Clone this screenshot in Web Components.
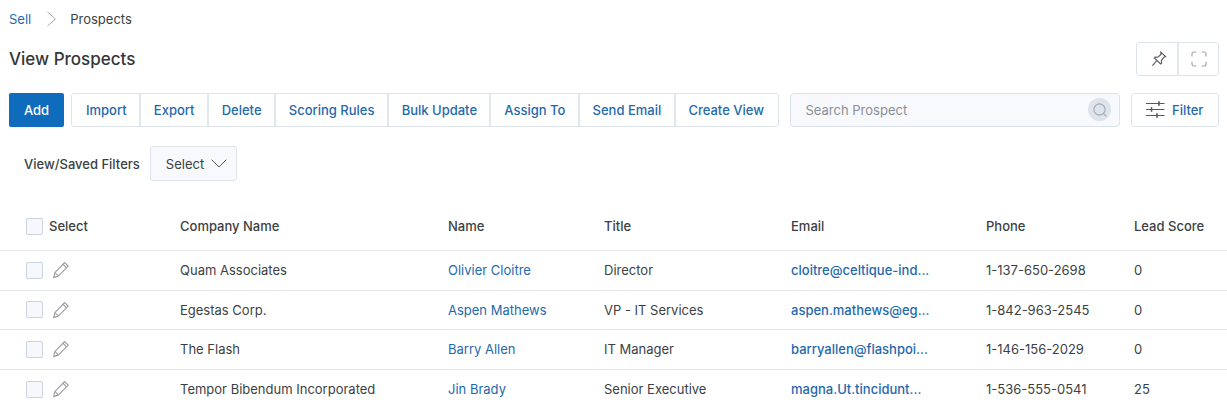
<!DOCTYPE html>
<html lang="en">
<head>
<meta charset="utf-8">
<title>View Prospects</title>
<style>
  html, body { margin: 0; height: 406px; overflow: hidden; background: #fff; }
  body { font-family: Inter, "Liberation Sans", sans-serif; font-size: 13px; color: #3c3f44; }
</style>
</head>
<body>
<prospects-page></prospects-page>

<script>
const ICONS = {
    chevron: '<svg width="11" height="16" viewBox="0 0 11 16" fill="none" stroke="#a9adb3" stroke-width="1"><path d="M1.5 1l8 7-8 7"/></svg>',
    pin: '<svg width="18" height="18" viewBox="0 0 18 18" fill="none" stroke="#55585d" stroke-width="1.1"><path d="M10.8 2.2l4.8 4.4-1.6.6-2.6 3.2.2 2.6-1 .9-6.3-5.9 1-1 2.5.2 3.2-2.8z"/><path d="M6.6 10.9L2.4 15.6"/></svg>',
    expand: '<svg width="16" height="16" viewBox="0 0 16 16" fill="none" stroke="#a3a7ad" stroke-width="1.2" stroke-linecap="round"><path d="M1 5V3a2 2 0 0 1 2-2h2M11 1h2a2 2 0 0 1 2 2v2M15 11v2a2 2 0 0 1-2 2h-2M5 15H3a2 2 0 0 1-2-2v-2"/></svg>',
    search: '<svg width="14" height="14" viewBox="0 0 14 14" fill="none" stroke="#a2a8b0" stroke-width="1.1"><circle cx="6.5" cy="6.5" r="5.6"/><path d="M10.6 10.6l2.8 2.8"/></svg>',
    sliders: '<svg width="19" height="17" viewBox="0 0 19 17" fill="none" stroke="#55585d" stroke-width="1.2"><path d="M0 2.5h18.5M0 8.5h18.5M0 14.5h18.5"/><path d="M13 .2v4.6M5.5 6.2v4.6M11 12.2v4.6" stroke-width="1.6"/></svg>',
    caret: '<svg width="16" height="9" viewBox="0 0 16 9" fill="none" stroke="#55585d" stroke-width="1"><path d="M.7.7L8 8l7.3-7.3"/></svg>',
    pencil: '<svg width="18" height="18" viewBox="0 0 18 18" fill="none" stroke="#94989e" stroke-width="1.05"><path d="M12.6 1.6l3.6 3.4L6.4 15l-4.7 1.6L3 11.5z"/><path d="M3 11.5l3.4 3.5M11 3.3l3.6 3.5"/></svg>'
};

class AppIcon extends HTMLElement {
    connectedCallback() {
        this.attachShadow({ mode: 'open' });
        this.shadowRoot.innerHTML = `
            <style>:host { display: inline-flex; align-items: center; justify-content: center; }</style>
            ${ICONS[this.getAttribute('name')]}`;
    }
}
customElements.define('app-icon', AppIcon);

class AppCheckbox extends HTMLElement {
    connectedCallback() {
        this.attachShadow({ mode: 'open' });
        this.shadowRoot.innerHTML = `
            <style>
                :host {
                    display: block;
                    box-sizing: border-box;
                    width: 17px;
                    height: 17px;
                    background: #f6f8fb;
                    border: 1.5px solid #c9d4e2;
                    border-radius: 2px;
                }
            </style>`;
    }
}
customElements.define('app-checkbox', AppCheckbox);

// one cell of the button strip
class AppButton extends HTMLElement {
    connectedCallback() {
        this.attachShadow({ mode: 'open' });
        this.shadowRoot.innerHTML = `
            <style>
                :host {
                    display: flex;
                    align-items: center;
                    justify-content: center;
                    box-sizing: border-box;
                    height: 100%;
                    padding: 0 12.4px 0 12.8px;
                    font-weight: 500;
                    font-size: 13px;
                    color: #1f69ae;
                    border-left: 2px solid #e2e7ee;
                    white-space: nowrap;
                }
                :host(:first-child) { border-left: 0; padding-left: 14px; }
                :host(:last-child) { flex: 1; justify-content: flex-start; }
            </style>
            <slot></slot>`;
    }
}
customElements.define('app-button', AppButton);

class ButtonGroup extends HTMLElement {
    connectedCallback() {
        this.attachShadow({ mode: 'open' });
        this.shadowRoot.innerHTML = `
            <style>
                :host {
                    display: flex;
                    flex: none;
                    box-sizing: border-box;
                    height: 34.5px;
                    background: #fff;
                    border: 1px solid #dfe4ec;
                    border-radius: 3px;
                }
            </style>
            <slot></slot>`;
    }
}
customElements.define('button-group', ButtonGroup);

class SearchBox extends HTMLElement {
    connectedCallback() {
        this.attachShadow({ mode: 'open' });
        this.shadowRoot.innerHTML = `
            <style>
                :host {
                    display: flex;
                    flex: none;
                    align-items: center;
                    justify-content: space-between;
                    box-sizing: border-box;
                    height: 34.5px;
                    padding: 0 8px 0 14.5px;
                    background: #f7f9fc;
                    border: 1px solid #dbe2ea;
                    border-radius: 4px;
                    color: #8b8f95;
                }
                .go {
                    display: flex;
                    align-items: center;
                    justify-content: center;
                    width: 23px;
                    height: 23px;
                    border-radius: 50%;
                    background: #dde4ec;
                }
            </style>
            <span>${this.getAttribute('placeholder')}</span>
            <span class="go"><app-icon name="search"></app-icon></span>`;
    }
}
customElements.define('search-box', SearchBox);

class ProspectRow extends HTMLElement {
    connectedCallback() {
        const [company, name, title, email, phone, score] = JSON.parse(this.getAttribute('data-cells'));
        this.attachShadow({ mode: 'open' });
        this.shadowRoot.innerHTML = `
            <style>
                :host {
                    display: grid;
                    grid-template-columns: var(--columns);
                    align-items: center;
                    box-sizing: border-box;
                    height: 39.5px;
                    padding-left: 26px;
                    border-bottom: 1px solid #e4e8ee;
                }
                :host(:last-child) { border-bottom: 0; }
                .tools { display: flex; align-items: center; gap: 9px; }
                .link { color: #1f69ae; }
                .email { color: #1f69ae; font-weight: 500; }
            </style>
            <div class="tools"><app-checkbox></app-checkbox><app-icon name="pencil"></app-icon></div>
            <div>${company}</div>
            <div class="link">${name}</div>
            <div>${title}</div>
            <div class="email">${email}</div>
            <div>${phone}</div>
            <div>${score}</div>`;
    }
}
customElements.define('prospect-row', ProspectRow);

class ProspectTable extends HTMLElement {
    connectedCallback() {
        this.attachShadow({ mode: 'open' });
        this.shadowRoot.innerHTML = `
            <style>
                :host {
                    display: block;
                    --columns: 154px 268px 156px 187px 195px 148px 1fr;
                }
                .head {
                    display: grid;
                    grid-template-columns: var(--columns);
                    align-items: center;
                    box-sizing: border-box;
                    height: 49px;
                    padding-left: 26px;
                    font-weight: 500;
                    border-bottom: 1px solid #e4e8ee;
                }
                .select { display: flex; align-items: center; gap: 6px; }
            </style>
            <div class="head">
                <div class="select"><app-checkbox></app-checkbox>Select</div>
                <div>Company Name</div>
                <div>Name</div>
                <div>Title</div>
                <div>Email</div>
                <div>Phone</div>
                <div>Lead Score</div>
            </div>
            <slot></slot>`;
    }
}
customElements.define('prospect-table', ProspectTable);

class ProspectsPage extends HTMLElement {
    connectedCallback() {
        this.attachShadow({ mode: 'open' });
        const rows = [
            ['Quam Associates', 'Olivier Cloitre', 'Director', 'cloitre@celtique-ind...', '1-137-650-2698', '0'],
            ['Egestas Corp.', 'Aspen Mathews', 'VP - IT Services', 'aspen.mathews@eg...', '1-842-963-2545', '0'],
            ['The Flash', 'Barry Allen', 'IT Manager', 'barryallen@flashpoi...', '1-146-156-2029', '0'],
            ['Tempor Bibendum Incorporated', 'Jin Brady', 'Senior Executive', 'magna.Ut.tincidunt...', '1-536-555-0541', '25']
        ];
        this.shadowRoot.innerHTML = `
            <style>
                :host { display: block; }
                .crumbs {
                    display: flex;
                    align-items: center;
                    height: 20px;
                    padding: 9px 0 0 9px;
                }
                .crumbs a { color: #1f69ae; text-decoration: none; }
                .crumbs app-icon { margin: 0 13px 0 15px; }
                .title-row {
                    display: flex;
                    align-items: center;
                    justify-content: space-between;
                    height: 34px;
                    margin-top: 13px;
                    padding: 0 8px 0 9px;
                }
                h1 { margin: 0; font-size: 17px; font-weight: 500; color: #33363a; }
                .view-tools { width: 83px; height: 34px; }
                .view-tools app-button { flex: none; width: 40px; padding: 0 0 0 3px; }
                .view-tools app-button:last-child { flex: 1; padding: 0; justify-content: center; }
                .toolbar {
                    display: flex;
                    align-items: center;
                    gap: 7px;
                    margin-top: 16.5px;
                    padding: 0 8px 0 9px;
                }
                .add {
                    display: flex;
                    flex: none;
                    align-items: center;
                    justify-content: center;
                    box-sizing: border-box;
                    width: 55px;
                    height: 34.5px;
                    background: #0f6cbd;
                    color: #fff;
                    font-weight: 500;
                    border-radius: 2px;
                }
                .strip { width: 708px; }
                search-box { width: 330px; margin-left: 4px; }
                .filter { width: 88px; margin-left: 4px; }
                .filter app-button { padding: 0 0 0 14px; }
                .filter app-icon { margin-right: 7px; }
                .saved {
                    display: flex;
                    align-items: center;
                    gap: 10px;
                    margin-top: 19px;
                    padding-left: 24px;
                    font-weight: 500;
                }
                .picker {
                    display: flex;
                    align-items: center;
                    justify-content: space-between;
                    box-sizing: border-box;
                    width: 87px;
                    height: 35px;
                    padding: 0 9px 0 15px;
                    background: #f7f9fc;
                    border: 1px solid #dfe4ec;
                    border-radius: 3px;
                    font-weight: 400;
                }
                prospect-table { margin-top: 21px; }
            </style>
            <nav class="crumbs"><a href="#">Sell</a><app-icon name="chevron"></app-icon><span>Prospects</span></nav>
            <div class="title-row">
                <h1>View Prospects</h1>
                <button-group class="view-tools">
                    <app-button><app-icon name="pin"></app-icon></app-button>
                    <app-button><app-icon name="expand"></app-icon></app-button>
                </button-group>
            </div>
            <div class="toolbar">
                <div class="add">Add</div>
                <button-group class="strip">
                    ${['Import', 'Export', 'Delete', 'Scoring Rules', 'Bulk Update', 'Assign To', 'Send Email', 'Create View']
                        .map(label => `<app-button>${label}</app-button>`).join('')}
                </button-group>
                <search-box placeholder="Search Prospect"></search-box>
                <button-group class="filter"><app-button><app-icon name="sliders"></app-icon>Filter</app-button></button-group>
            </div>
            <div class="saved">
                <span>View/Saved Filters</span>
                <div class="picker"><span>Select</span><app-icon name="caret"></app-icon></div>
            </div>
            <prospect-table>
                ${rows.map(r => `<prospect-row data-cells='${JSON.stringify(r)}'></prospect-row>`).join('')}
            </prospect-table>`;
    }
}
customElements.define('prospects-page', ProspectsPage);
</script>
</body>
</html>
